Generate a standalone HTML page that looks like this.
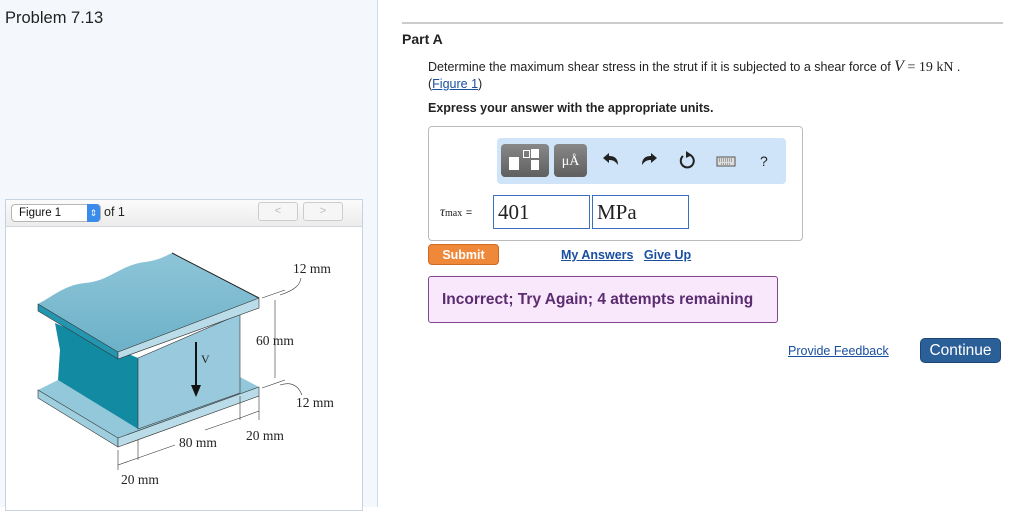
<!DOCTYPE html>
<html><head><meta charset="utf-8"><style>
body{margin:0;width:1025px;height:507px;position:relative;background:#fff;font-family:"Liberation Sans",sans-serif;overflow:hidden}
.a{position:absolute}
.lp{left:0;top:0;width:377px;height:507px;background:#f4f8fc;border-right:1px solid #cfdceb}
a{color:#1a4fa0}
.btn{position:absolute;border-radius:4px}
</style></head><body>
<div class="a lp"></div>
<div class="a" style="left:5px;top:9px;font-size:16.5px;color:#222">Problem 7.13</div>
<div class="a" style="left:5px;top:199px;width:356px;height:310px;background:#fff;border:1px solid #c5d3e2"></div>
<div class="a" style="left:5px;top:199px;width:356px;height:26px;background:linear-gradient(#fbfbfb,#ececec);border:1px solid #c5d3e2;border-bottom-color:#d0d6dc"></div>
<div class="a" style="left:11px;top:204px;width:88px;height:16px;background:#fff;border:1px solid #b5b5b5;border-radius:4px;font-size:11.5px;line-height:16px;text-indent:7px;color:#111">Figure 1</div>
<div class="a" style="left:87px;top:204px;width:13px;height:18px;background:#3b8bea;border-radius:0 4px 4px 0;color:#fff;font-size:9px;text-align:center;line-height:18px">⇕</div>
<div class="a" style="left:104px;top:205px;font-size:12.5px;color:#222">of 1</div>
<div class="a" style="left:258px;top:202px;width:38px;height:17px;border:1px solid #ccc;border-radius:3px;background:#f6f6f6;color:#bbb;font-size:11px;text-align:center;line-height:17px">&lt;</div>
<div class="a" style="left:303px;top:202px;width:38px;height:17px;border:1px solid #ccc;border-radius:3px;background:#f6f6f6;color:#bbb;font-size:11px;text-align:center;line-height:17px">&gt;</div>
<svg class="a" style="left:0;top:0" width="377" height="507" font-family="Liberation Serif,serif" font-size="13.5" fill="#222">
<defs><linearGradient id="g1" x1="0" y1="0" x2="0" y2="1"><stop offset="0" stop-color="#8ec5d8"/><stop offset="1" stop-color="#6cb1c8"/></linearGradient></defs>
<polygon points="38,390 118,438 259,387 240,377 240,393 138,429 58,380" fill="#92c8da"/>
<polygon points="38,390 118,438 118,447 38,398" fill="#9fcfdf" stroke="#333" stroke-width="0.6"/>
<polygon points="118,438 259,387 259,396 118,447" fill="#b9dce8" stroke="#333" stroke-width="0.6"/>
<polygon points="55,323 138,358 138,429 58,380 60,350" fill="#128aa2"/>
<polygon points="138,358 240,314 240,393 138,429" fill="#99c9dc" stroke="#333" stroke-width="0.6"/>
<path d="M38,304 C55,295 65,285 85,283 C110,281 120,265 145,262 C160,260 165,256 172,253 L259,298 L118,352 Z" fill="url(#g1)"/>
<polygon points="38,304 118,352 118,359 38,311" fill="#2596b0" stroke="#333" stroke-width="0.6"/>
<polygon points="118,352 259,298 259,308 118,359" fill="#b9dce8" stroke="#333" stroke-width="0.6"/>
<line x1="172" y1="253" x2="259" y2="298" stroke="#222"/>
<line x1="196" y1="342" x2="196" y2="385" stroke="#111" stroke-width="2"/>
<polygon points="191,385 201,385 196,397" fill="#111"/>
<text x="201" y="363" font-size="12">V</text>
<g stroke="#333" stroke-width="0.6" fill="none"><line x1="275" y1="300" x2="275" y2="378"/><line x1="262" y1="298" x2="285" y2="290"/><line x1="262" y1="388" x2="285" y2="380"/><path d="M280,295 C295,290 300,285 301,278"/><path d="M280,385 C295,380 300,390 302,395"/><line x1="240" y1="396" x2="240" y2="420"/><line x1="259" y1="396" x2="259" y2="420"/><line x1="118" y1="450" x2="118" y2="470"/><line x1="138" y1="440" x2="138" y2="460"/><line x1="138" y1="458" x2="175" y2="445"/><line x1="205" y1="430" x2="240" y2="418"/><line x1="240" y1="418" x2="259" y2="411"/><line x1="118" y1="465" x2="138" y2="458"/></g>
<text x="293" y="273">12 mm</text><text x="256" y="345">60 mm</text><text x="296" y="407">12 mm</text><text x="179" y="447">80 mm</text><text x="246" y="440">20 mm</text><text x="121" y="484">20 mm</text>
</svg>
<div class="a" style="left:402px;top:22px;width:601px;height:2px;background:#ccc"></div>
<div class="a" style="left:402px;top:31px;font-size:14px;font-weight:bold;color:#222">Part A</div>
<div class="a" style="left:428px;top:59px;font-size:12.5px;color:#222;line-height:16px;white-space:nowrap">Determine the maximum shear stress in the strut if it is subjected to a shear force of <i style="font-family:'Liberation Serif',serif;font-size:16px">V</i> <span style="font-family:'Liberation Serif',serif;font-size:14px">= 19 kN</span> .<br>(<a href="#">Figure 1</a>)</div>
<div class="a" style="left:428px;top:101px;font-size:12.5px;font-weight:bold;color:#222">Express your answer with the appropriate units.</div>
<div class="a" style="left:428px;top:126px;width:373px;height:113px;border:1px solid #bbb;border-radius:4px"></div>
<div class="a" style="left:497px;top:138px;width:289px;height:46px;background:#cfe4f8;border-radius:4px"></div>
<div class="btn" style="left:501px;top:144px;width:48px;height:33px;background:linear-gradient(#888,#5f5f5f)"><div class="a" style="left:8px;top:13px;width:10px;height:13px;background:#fff"></div><div class="a" style="left:22px;top:6px;width:5px;height:6px;border:1px solid #fff"></div><div class="a" style="left:30px;top:5px;width:8px;height:9px;background:#fff"></div><div class="a" style="left:30px;top:16px;width:8px;height:10px;background:#fff"></div></div>
<div class="btn" style="left:554px;top:144px;width:33px;height:33px;background:linear-gradient(#888,#5f5f5f);color:#fff;font-family:'Liberation Serif',serif;font-size:14px;text-align:center;line-height:35px">μÅ</div>
<svg class="a" style="left:600px;top:148px" width="180" height="26">
<path d="M18,17 C18,10 14,8 9,8 L9,5 L3,10 L9,15 L9,12 C13,12 15,13 18,17Z" fill="#222"/>
<path d="M42,17 C42,10 46,8 51,8 L51,5 L57,10 L51,15 L51,12 C47,12 45,13 42,17Z" fill="#222"/>
<path d="M90,7 A6.5,6.5 0 1 1 83,8" fill="none" stroke="#222" stroke-width="2"/><polygon points="86,3 92,7 86,10" fill="#222"/>
<rect x="117" y="9" width="18" height="9" fill="#ddd" stroke="#555"/><path d="M119,11h14M119,13h14M121,16h10" stroke="#666" stroke-dasharray="1 1"/>
</svg>
<div class="a" style="left:760px;top:153px;font-size:14px;color:#222">?</div>
<div class="a" style="left:440px;top:205px;font-family:'Liberation Serif',serif;font-size:14px;color:#222"><i>τ</i><span style="font-size:10px">max</span> <span style="font-family:'Liberation Sans';font-size:11px">=</span></div>
<div class="a" style="left:493px;top:195px;width:95px;height:32px;border:1px solid #3a6fc2;font-family:'Liberation Serif',serif;font-size:21px;line-height:32px;text-indent:4px;color:#222">401</div>
<div class="a" style="left:592px;top:195px;width:95px;height:32px;border:1px solid #3a6fc2;font-family:'Liberation Serif',serif;font-size:21px;line-height:32px;text-indent:4px;color:#222">MPa</div>
<div class="btn" style="left:428px;top:244px;width:71px;height:21px;background:#f0883a;border:1px solid #d06a20;box-sizing:border-box;color:#fff;font-weight:bold;font-size:12.5px;text-align:center;line-height:20px">Submit</div>
<div class="a" style="left:561px;top:248px;font-size:12.5px;font-weight:bold"><a href="#">My Answers</a>&nbsp;&nbsp;&nbsp;<a href="#">Give Up</a></div>
<div class="a" style="left:428px;top:276px;width:348px;height:45px;background:#f9e8fc;border:1px solid #80468e;border-radius:3px;color:#5b2c6f;font-weight:bold;font-size:15.5px;line-height:45px;text-indent:13px;white-space:nowrap">Incorrect; Try Again; 4 attempts remaining</div>
<div class="a" style="left:788px;top:344px;font-size:12.5px"><a href="#">Provide Feedback</a></div>
<div class="btn" style="left:920px;top:338px;width:81px;height:25px;background:#2b5f98;border:1px solid #1d4677;box-sizing:border-box;color:#fff;font-size:15.5px;text-align:center;line-height:23px;border-radius:5px">Continue</div>
</body></html>
